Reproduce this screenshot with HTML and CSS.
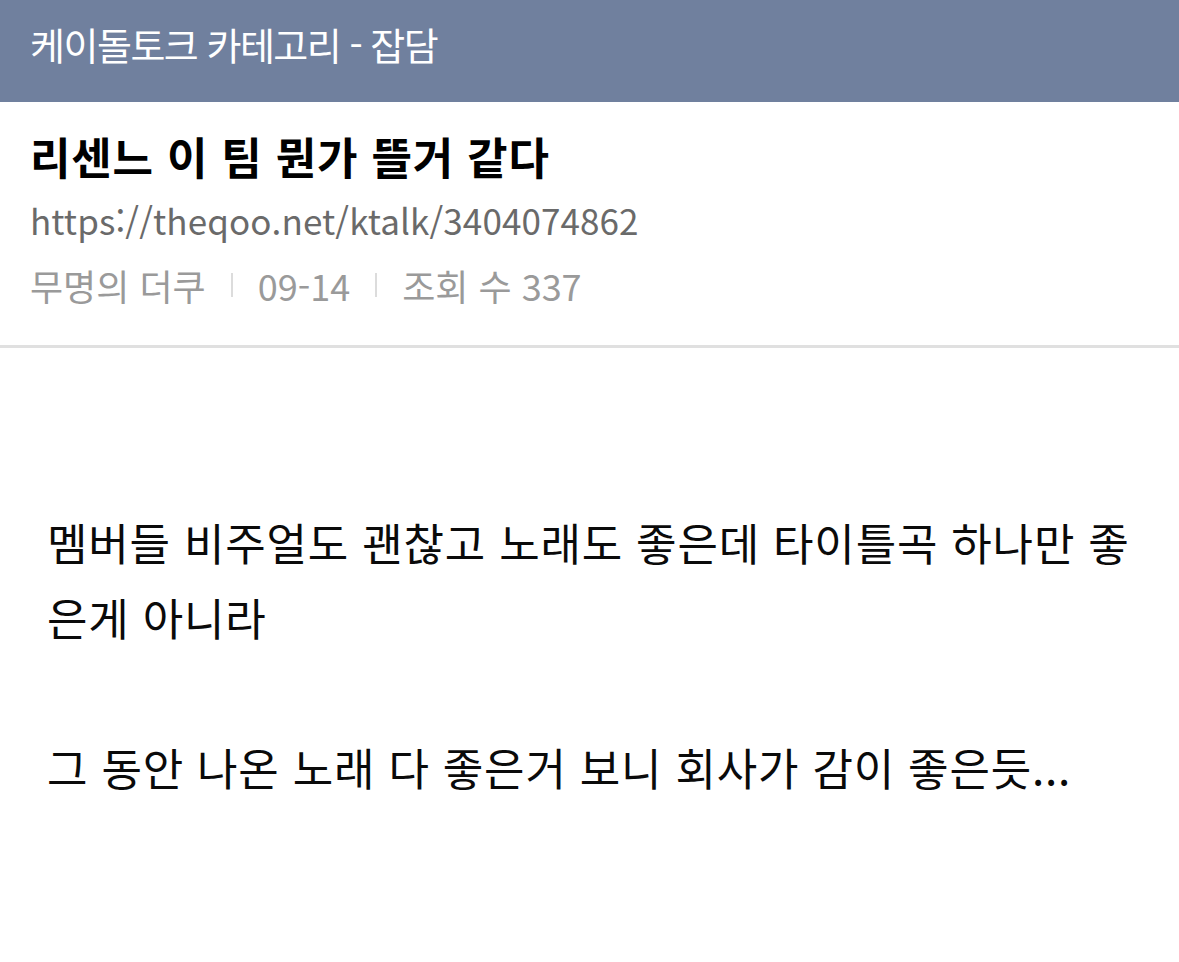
FILE: index.html
```html
<!DOCTYPE html>
<html lang="ko">
<head>
  <meta charset="UTF-8">
  <title>리센느 이 팀 뭔가 뜰거 같다</title>
  <link rel="stylesheet" href="styles.css">
</head>
<body>
  <div class="category">케이돌토크 카테고리 - 잡담</div>

  <div class="post-head">
    <h1 class="title">리센느 이 팀 뭔가 뜰거 같다</h1>
    <div class="link">https://theqoo.net/ktalk/3404074862</div>
    <div class="meta">
      <span>무명의 더쿠</span>
      <span class="sep"></span>
      <span>09-14</span>
      <span class="sep"></span>
      <span>조회 수 337</span>
    </div>
  </div>

  <div class="post-body">
    <p>멤버들 비주얼도 괜찮고 노래도 좋은데 타이틀곡 하나만 좋은게 아니라</p>
    <p>&nbsp;</p>
    <p>그 동안 나온 노래 다 좋은거 보니 회사가 감이 좋은듯...</p>
  </div>
</body>
</html>
```

FILE: styles.css
```css
body {
  margin: 0;
  background: #fff;
  font-family: "Noto Sans CJK KR", "Noto Sans", sans-serif;
  color: #0a0a0a;
}

.category {
  height: 102px;
  box-sizing: border-box;
  padding: 16px 30px 0;
  background: #70809e;
  color: #fff;
  font-size: 38px;
  line-height: 56px;
  letter-spacing: -1.5px;
}

.post-head {
  padding: 22px 30px 35px;
  border-bottom: 3px solid #e0e0e0;
}

.title {
  margin: 0;
  font-size: 44px;
  line-height: 64px;
  font-weight: bold;
  letter-spacing: 0.8px;
  color: #000;
}

.link {
  margin-top: 7px;
  font-size: 35px;
  line-height: 50px;
  letter-spacing: 0.1px;
  color: #6a6a6a;
}

.meta {
  display: flex;
  align-items: center;
  margin-top: 15px;
  font-size: 36px;
  line-height: 50px;
  color: #9a9a9a;
}

.sep {
  width: 2px;
  height: 24px;
  margin: 0 25px;
  background: #dcdcdc;
}

.post-body {
  padding: 157px 40px 0 47px;
  font-size: 44px;
  line-height: 75px;
  letter-spacing: 0.8px;
}

.post-body p {
  margin: 0;
}
```
